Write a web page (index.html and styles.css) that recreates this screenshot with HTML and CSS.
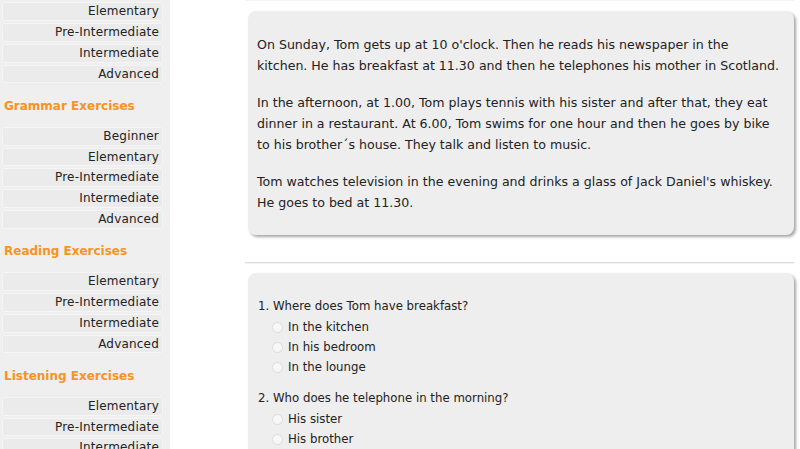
FILE: index.html
```html
<!DOCTYPE html>
<html>
<head>
<meta charset="utf-8">
<link rel="stylesheet" href="styles.css">
</head>
<body>
<div class="page">
  <nav class="sidebar">
    <ul class="menu">
      <li>Elementary</li>
      <li>Pre-Intermediate</li>
      <li>Intermediate</li>
      <li>Advanced</li>
    </ul>
    <h3 class="menu-title">Grammar Exercises</h3>
    <ul class="menu">
      <li>Beginner</li>
      <li>Elementary</li>
      <li>Pre-Intermediate</li>
      <li>Intermediate</li>
      <li>Advanced</li>
    </ul>
    <h3 class="menu-title">Reading Exercises</h3>
    <ul class="menu">
      <li>Elementary</li>
      <li>Pre-Intermediate</li>
      <li>Intermediate</li>
      <li>Advanced</li>
    </ul>
    <h3 class="menu-title">Listening Exercises</h3>
    <ul class="menu">
      <li>Elementary</li>
      <li>Pre-Intermediate</li>
      <li>Intermediate</li>
      <li>Advanced</li>
    </ul>
  </nav>
  <main class="main">
    <div class="rule top-rule"></div>
    <section class="card text-card">
      <p>On Sunday, Tom gets up at 10 o'clock. Then he reads his newspaper in the<br>kitchen. He has breakfast at 11.30 and then he telephones his mother in Scotland.</p>
      <p>In the afternoon, at 1.00, Tom plays tennis with his sister and after that, they eat dinner in a restaurant. At 6.00, Tom swims for one hour and then he goes by bike to his brother´s house. They talk and listen to music.</p>
      <p>Tom watches television in the evening and drinks a glass of Jack Daniel's whiskey. He goes to bed at 11.30.</p>
    </section>
    <div class="rule mid-rule"></div>
    <section class="card quiz-card">
      <div class="question">
        <div class="q-text">1. Where does Tom have breakfast?</div>
        <label class="option"><span class="radio"></span>In the kitchen</label>
        <label class="option"><span class="radio"></span>In his bedroom</label>
        <label class="option"><span class="radio"></span>In the lounge</label>
      </div>
      <div class="question">
        <div class="q-text">2. Who does he telephone in the morning?</div>
        <label class="option"><span class="radio"></span>His sister</label>
        <label class="option"><span class="radio"></span>His brother</label>
        <label class="option"><span class="radio"></span>His mother</label>
      </div>
    </section>
  </main>
</div>
</body>
</html>
```
FILE: styles.css
```css
html, body {
  margin: 0;
  padding: 0;
  background: #ffffff;
  overflow: hidden;
}
body {
  font-family: "DejaVu Sans", Verdana, sans-serif;
  color: #222222;
}
.page {
  display: flex;
  align-items: flex-start;
  height: 449px;
  overflow: hidden;
}
.sidebar {
  width: 170px;
  flex: 0 0 170px;
  background: #efefef;
  padding-top: 2.4px;
  min-height: 600px;
}
.menu {
  list-style: none;
  margin: 0;
  padding: 0 7px 0 2px;
}
.menu li {
  height: 16.75px;
  line-height: 16.75px;
  margin-bottom: 2px;
  font-size: 12px;
  letter-spacing: 0.2px;
  text-align: right;
  padding-right: 3px;
  background: #ebebeb;
  border: 1px solid #f5f5f5;
  border-radius: 2px;
  color: #222;
}
.menu-title {
  margin: 0;
  padding: 13.3px 0 13.3px 4px;
  line-height: 15px;
  font-size: 12px;
  font-weight: bold;
  color: #f7931e;
}
.main {
  flex: 1;
  padding: 0 6px 0 78px;
}
.rule {
  height: 0;
  border-top: 1px solid #dcdcdc;
  border-bottom: 1px solid #f3f3f3;
  margin-left: -3px;
  margin-right: 0;
}
.top-rule {
  margin-top: -1px;
}
.card {
  background: #eeeeee;
  border-radius: 8px;
  box-shadow: 2px 2px 3px rgba(0, 0, 0, 0.35);
}
.text-card {
  margin-top: 10px;
  padding: 22.5px 9px 22.5px 9px;
  font-size: 12.6px;
  line-height: 21px;
}
.text-card p {
  margin: 0 0 16px;
}
.text-card p:last-child {
  margin-bottom: 0;
}
.mid-rule {
  margin-top: 27px;
}
.quiz-card {
  margin-top: 9px;
  padding: 23px 10px 20px 10px;
  font-size: 11.75px;
  line-height: 20px;
  height: 300px;
}
.question {
  margin-bottom: 11px;
}
.q-text {
  margin-bottom: 1px;
}
.option {
  display: flex;
  align-items: center;
  padding-left: 14px;
}
.radio {
  width: 9px;
  height: 9px;
  border-radius: 50%;
  border: 1px solid #dddddd;
  background: #f7f7f7;
  margin-right: 5px;
}
```
